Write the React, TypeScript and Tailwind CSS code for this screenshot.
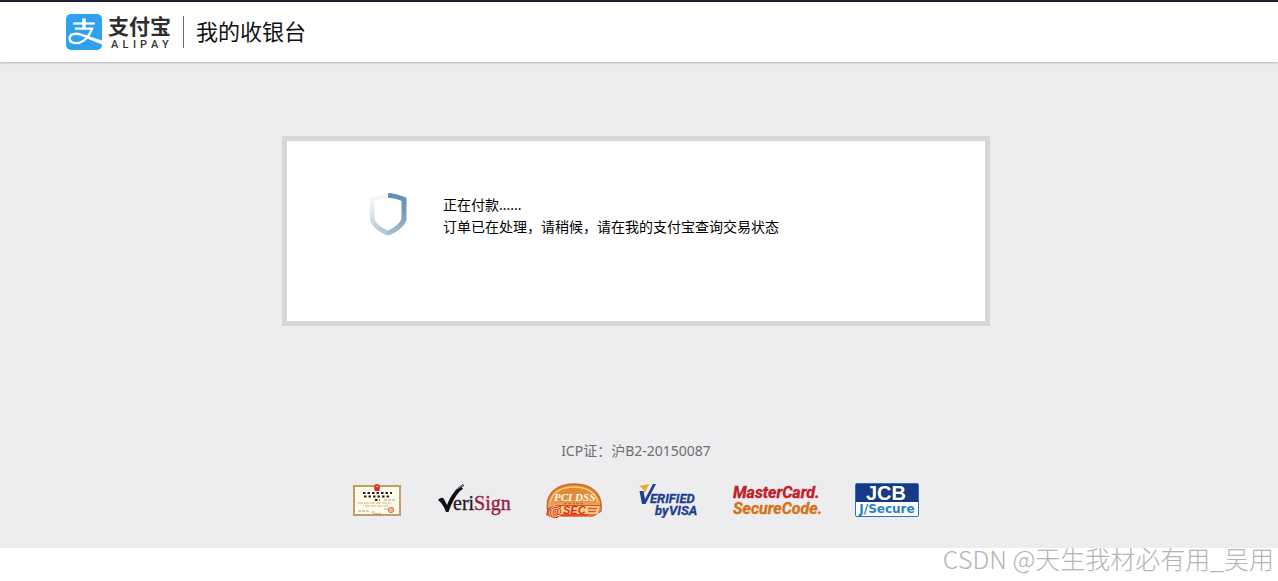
const sans = "font-['Noto_Sans','Noto_Sans_CJK_SC',sans-serif]";

function AlipayLogo() {
  return (
    <svg viewBox="0 -4 108 42" className="h-[42px] w-[108px]" role="img" aria-label="支付宝 ALIPAY">
      <rect x="1" y="1" width="36" height="36" rx="5" fill="#2ea1f0" />
      <g fill="none" stroke="#fff" strokeLinecap="butt">
        <path d="M8 10.500H30" strokeWidth="2.200" />
        <path d="M19 5.500V15.500" strokeWidth="3.400" />
        <path d="M10 15.700H27C25.500 20 23 24 19 27.300C13.500 31.500 4.800 31 4.600 25.500C4.500 20.800 10.500 19.800 16 21.600L37 29.200" strokeWidth="2.300" />
      </g>
      <path d="M20 22.400L37 27.500V31.200C31 29.300 25.500 26.800 20 24.400Z" fill="#fff" />
      <text x="43" y="21" fontSize="21" fontWeight="700" fill="#2e2e2e" fontFamily="Noto Sans CJK SC, sans-serif">支付宝</text>
      <text x="46 57.500 68 75 86 97" y="35" fontSize="11" fontWeight="500" fill="#333" fontFamily="Roboto, sans-serif">ALIPAY</text>
    </svg>
  );
}

function ShieldSpinner() {
  return (
    <svg viewBox="0 0 38 43" className="h-[43px] w-[38px] shrink-0" aria-hidden="true">
      <defs>
        <linearGradient id="shield-right" x1="0" y1="0" x2="0" y2="1">
          <stop offset="0" stopColor="#5f8eb2" />
          <stop offset="0.5" stopColor="#779fbd" />
          <stop offset="1" stopColor="#a9c2d2" />
        </linearGradient>
        <linearGradient id="shield-left" x1="0" y1="0" x2="0" y2="1">
          <stop offset="0" stopColor="#fbfcfd" />
          <stop offset="0.5" stopColor="#dbe5ec" />
          <stop offset="1" stopColor="#a9c2d2" />
        </linearGradient>
      </defs>
      <path d="M19 0C25 .5 31.500 2 37.500 4.800V27C35.500 34 27 40 19 42.500V37.500C25 35 31 30.500 32.500 25.500V8C28.500 6.200 24 5.200 19 4.800Z" fill="url(#shield-right)" />
      <path d="M19 0C13 .5 6.500 2 1 4.800V27C3 34 11 40 19 42.500V37.500C13 35 7 30.500 5.500 25.500V8C9.500 6.200 14 5.200 19 4.800Z" fill="url(#shield-left)" />
    </svg>
  );
}

function LicenceBadge() {
  return (
    <svg viewBox="0 0 48 34" className="h-[34px] w-12" role="img" aria-label="营业执照">
      <rect x="1" y="3" width="46" height="29" fill="#fffbea" stroke="#b99a60" strokeWidth="2" />
      <rect x="1" y="3" width="46" height="29" fill="none" stroke="#d3b981" strokeWidth="1" strokeDasharray="1 2" />
      <circle cx="24" cy="4" r="3" fill="#e33a2c" />
      <path d="M21.500 5H26.500V8H21.500Z" fill="#d92d22" />
      <path d="M23 3h2v1h-2z" fill="#f6ba73" />
      <path d="M10 10H39M11 13.500H36M22 17H27" stroke="#222" strokeWidth="2" strokeDasharray="2.500 2" />
      <path d="M5 20H38M12 23H36" stroke="#d8b27b" strokeWidth="1" strokeDasharray="5 1" />
      <path d="M31 17H43M5 28H17" stroke="#a99b86" strokeWidth="1" strokeDasharray="3 1" />
      <path d="M18 29H22M31 26H36" stroke="#98bcc3" strokeWidth="1" />
      <circle cx="38" cy="27" r="2.700" fill="#f3b39b" stroke="#dd7c61" />
      <path d="M20 31h8" stroke="#d57d3b" />
    </svg>
  );
}

function VeriSignBadge() {
  return (
    <svg viewBox="-2 0 76 34" className="h-[34px] w-[76px]" role="img" aria-label="VeriSign">
      <path d="M1 17C4 14 6 14 7.500 17L10 22C13.500 13 19 5 26 1L27 3L24.500 4L26 6L23 8C17.500 14 14 22 11.500 29H9C7 24 5 20 1 17Z" fill="#101014" />
      <path d="M20 6L26 2" stroke="#b898a5" strokeWidth="1" />
      <text x="16" y="27" fontSize="20" fontFamily="Liberation Serif, serif" fill="#24182c" stroke="#24182c" strokeWidth=".3">eri<tspan fill="#97203f" stroke="#97203f" strokeWidth=".4">Sign</tspan></text>
    </svg>
  );
}

function PciBadge() {
  return (
    <svg viewBox="0 0 58 38" className="h-[38px] w-[58px]" role="img" aria-label="PCI DSS atsec">
      <defs>
        <linearGradient id="pci-gold" x1="0" y1="0" x2="0" y2="1">
          <stop offset="0" stopColor="#d98635" />
          <stop offset="0.5" stopColor="#e39040" />
          <stop offset="1" stopColor="#f7d29a" />
        </linearGradient>
      </defs>
      <path d="M3 31C-1 12 13 3 29 3C46 3 58 12 56 30L48 35H5Z" fill="url(#pci-gold)" stroke="#d56829" strokeWidth="1.500" />
      <path d="M5 22C7 11 17 6 29 6C41 6 51 11 53 22" fill="none" stroke="#f8cf70" strokeWidth="1.500" />
      <text x="9" y="20" fontSize="11" fontStyle="italic" fontWeight="700" fontFamily="Liberation Serif, serif" fill="#fffaf0">PCI DSS</text>
      <path d="M19 22.500H38" stroke="#c97835" strokeWidth="1.500" strokeDasharray="3 1" />
      <path d="M3 27L12 24H56L53 33L44 34L40 35H14L8 37L1 34Z" fill="#e64a28" />
      <path d="M16 25H55L53 33H16Z" fill="#fbd08c" />
      <text x="4" y="35" fontSize="13" fontStyle="italic" fontWeight="700" fontFamily="Liberation Sans, sans-serif" fill="#d82b1c" stroke="#ffe2a5" strokeWidth="1.300" paintOrder="stroke">@</text>
      <text x="18" y="33" fontSize="11" fontStyle="italic" fontWeight="700" fontFamily="Liberation Sans, sans-serif" fill="#de301f">SEC</text>
      <path d="M43 27.500H52M43 30.500H51" stroke="#df5531" strokeWidth="1.500" />
    </svg>
  );
}

function VisaBadge() {
  return (
    <svg viewBox="0 0 62 36" className="h-9 w-[62px]" role="img" aria-label="Verified by VISA">
      <path d="M2 4L12 2L8 11L6 7Z" fill="#f1a536" />
      <path d="M2.500 9H6.500L8 17L16 2H19L8.500 22H5Z" fill="#1e3e8f" />
      <g fill="#1e3e8f" stroke="#1e3e8f" strokeWidth=".3" fontFamily="Roboto, sans-serif" fontWeight="700" fontStyle="italic">
        <text x="13" y="21" fontSize="13">ERIFIED</text>
        <text x="18" y="33" fontSize="13">by</text>
        <text x="32" y="33" fontSize="13">VISA</text>
      </g>
    </svg>
  );
}

function MasterCardBadge() {
  return (
    <svg viewBox="0 0 88 36" className="h-9 w-[88px]" role="img" aria-label="MasterCard. SecureCode.">
      <g fontFamily="Roboto, sans-serif" fontWeight="700" fontStyle="italic" fontSize="16" strokeWidth=".4">
        <text x="0" y="16" fill="#c22026" stroke="#c22026">MasterCard.</text>
        <text x="0" y="32" fill="#d57218" stroke="#d57218">SecureCode.</text>
      </g>
    </svg>
  );
}

function JcbBadge() {
  return (
    <svg viewBox="0 0 64 34" className="h-[34px] w-16" role="img" aria-label="JCB J/Secure">
      <rect x=".5" y=".5" width="63" height="33" rx="1.500" fill="#fff" stroke="#2b75b8" />
      <path d="M1 1H63V19H1Z" fill="#183984" />
      <text x="31" y="17" textAnchor="middle" fontSize="20" fontWeight="700" fontFamily="Liberation Sans, sans-serif" fill="#fff">JCB</text>
      <text x="32" y="30" textAnchor="middle" fontSize="12" fontWeight="700" fontFamily="DejaVu Sans, sans-serif" fill="#2783c4">J/Secure</text>
    </svg>
  );
}

export default function App() {
  return (
    <div className={`relative flex min-h-screen flex-col bg-white text-black ${sans}`}>
      <header className="z-10 flex items-end border-t-2 border-[#1f1e2d] bg-white pt-[7px] pb-[11px] pl-[65px] shadow-[0_1px_2px_rgba(0,0,0,0.25)]">
        <AlipayLogo />
        <div className="mb-[3px] ml-2.5 h-8 w-px bg-[#6b6b6b]" />
        <h1 className="mb-1 ml-3 text-[22px] leading-8 text-[#111]">我的收银台</h1>
      </header>

      <div className="mb-[33px] flex grow flex-col items-center bg-[#ededef] pt-[74px] pr-[38px] pb-[29px] pl-8">
        <main className="flex min-h-[190px] w-full max-w-[708px] items-start border-5 border-[#d7d7d7] bg-white pt-[52px] pl-[82px]">
          <ShieldSpinner />
          <div className="ml-9 pt-px text-[14px] leading-[22px]" role="status">
            <p>正在付款......</p>
            <p>订单已在处理，请稍候，请在我的支付宝查询交易状态</p>
          </div>
        </main>

        <footer className="mt-auto flex flex-col items-center gap-5">
          <p className="text-[14px] leading-5 text-[#6f6f6f]">ICP证：沪B2-20150087</p>
          <div className="flex items-center gap-[34px]">
            <LicenceBadge />
            <VeriSignBadge />
            <PciBadge />
            <VisaBadge />
            <MasterCardBadge />
            <JcbBadge />
          </div>
        </footer>
      </div>

      <p className="absolute right-1 bottom-1.5 z-20 font-['Noto_Sans_CJK_SC',sans-serif] text-[25px] leading-[34px] font-light text-[#b4b4b4]">
        CSDN @天生我材必有用_吴用
      </p>
    </div>
  );
}
